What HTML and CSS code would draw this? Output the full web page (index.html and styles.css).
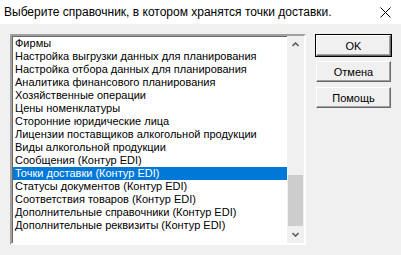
FILE: index.html
```html
<!DOCTYPE html>
<html lang="ru">
<head>
    <meta charset="UTF-8">
    <title>Выбор справочника</title>
    <link rel="stylesheet" href="styles.css">
</head>
<body>

    <!-- Заголовок окна -->
    <div class="titlebar">
        <span class="title">Выберите справочник, в котором хранятся точки доставки.</span>
        <span class="close">
            <svg width="11" height="11" viewBox="0 0 11 11"><path d="M0.5 0.5 L10.5 10.5 M10.5 0.5 L0.5 10.5" stroke="#000" stroke-width="1" fill="none"/></svg>
        </span>
    </div>

    <div class="dialog">
        <!-- Список справочников -->
        <div class="listbox">
            <ul class="items">
                <li>Фирмы</li>
                <li>Настройка выгрузки данных для планирования</li>
                <li>Настройка отбора данных для планирования</li>
                <li>Аналитика финансового планирования</li>
                <li>Хозяйственные операции</li>
                <li>Цены номенклатуры</li>
                <li>Сторонние юридические лица</li>
                <li>Лицензии поставщиков алкогольной продукции</li>
                <li>Виды алкогольной продукции</li>
                <li>Сообщения (Контур EDI)</li>
                <li class="selected">Точки доставки (Контур EDI)</li>
                <li>Статусы документов (Контур EDI)</li>
                <li>Соответствия товаров (Контур EDI)</li>
                <li>Дополнительные справочники (Контур EDI)</li>
                <li>Дополнительные реквизиты (Контур EDI)</li>
            </ul>
            <div class="scrollbar">
                <div class="arrow">
                    <svg width="7" height="5" viewBox="0 0 7 5"><path d="M0.5 4 L3.5 1 L6.5 4" stroke="#606060" stroke-width="1.6" fill="none"/></svg>
                </div>
                <div class="track"><div class="thumb"></div></div>
                <div class="arrow">
                    <svg width="7" height="5" viewBox="0 0 7 5"><path d="M0.5 1 L3.5 4 L6.5 1" stroke="#606060" stroke-width="1.6" fill="none"/></svg>
                </div>
            </div>
        </div>

        <!-- Кнопки -->
        <div class="buttons">
            <button class="btn default">OK</button>
            <button class="btn">Отмена</button>
            <button class="btn">Помощь</button>
        </div>
    </div>

</body>
</html>
```

FILE: styles.css
```css
/* Основа */
body {
    margin: 0;
    background: #f0f0f0;
    font-family: 'Liberation Sans', Arial, sans-serif;
    font-size: 11px;
    color: #000;
    width: 401px;
    height: 255px;
    overflow: hidden;
}

/* Заголовок */
.titlebar {
    height: 24px;
    background: #fff;
    display: flex;
    align-items: center;
    justify-content: space-between;
    padding: 0 10px 0 4px;
}

.title {
    font-family: 'Liberation Sans', Arial, sans-serif;
    font-size: 12px;
}

.close {
    display: flex;
}

/* Окно */
.dialog {
    display: flex;
    padding: 10px 0 0 10px;
    gap: 10px;
}

/* Список */
.listbox {
    width: 292px;
    height: 207px;
    display: flex;
    background: #fff;
    border: 2px solid;
    border-color: #a0a0a0 #fff #fff #a0a0a0;
    box-shadow: inset 1px 1px 0 #696969;
}

.items {
    list-style: none;
    margin: 0;
    padding: 1px 0 0 1px;
    flex: 1;
}

.items li {
    height: 13px;
    line-height: 13px;
    padding-left: 2px;
    white-space: nowrap;
}

.items li.selected {
    background: #0078d7;
    color: #fff;
}

/* Полоса прокрутки */
.scrollbar {
    width: 17px;
    display: flex;
    flex-direction: column;
    background: #f0f0f0;
}

.arrow {
    height: 17px;
    display: flex;
    align-items: center;
    justify-content: center;
}

.track {
    flex: 1;
    display: flex;
    flex-direction: column;
    justify-content: flex-end;
    align-items: center;
}

.thumb {
    width: 15px;
    height: 51px;
    background: #cdcdcd;
}

/* Кнопки */
.buttons {
    display: flex;
    flex-direction: column;
    gap: 5px;
    padding-top: 1px;
}

.btn {
    width: 75px;
    height: 21px;
    padding: 0;
    font-family: inherit;
    font-size: 11px;
    background: #f0f0f0;
    border: 1px solid;
    border-color: #fff #696969 #696969 #fff;
    box-shadow: inset -1px -1px 0 #a0a0a0;
}

.btn.default {
    outline: 1px solid #000;
    outline-offset: 0;
}
```
